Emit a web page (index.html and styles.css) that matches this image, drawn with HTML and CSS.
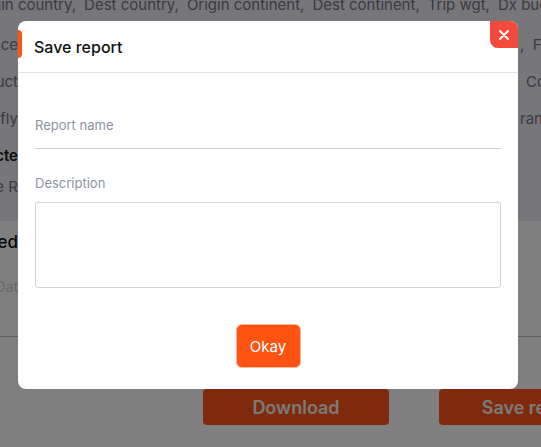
FILE: index.html
```html
<!DOCTYPE html>
<html lang="en">
<head>
<meta charset="utf-8">
<title>Save report</title>
<link rel="stylesheet" href="styles.css">
</head>
<body>
<div class="page">
  <div class="filters">
    <div class="row row-full">
      <span>Origin country,</span><span>Dest country,</span><span>Origin continent,</span><span>Dest continent,</span><span>Trip wgt,</span><span>Dx buckets</span>
    </div>
    <div class="row">
      <div class="clip-left">Service</div><div class="clip-right pad-2">,&nbsp;&nbsp;Flow</div>
    </div>
    <div class="row">
      <div class="clip-left">Product</div><div class="clip-right pad-8">Country</div>
    </div>
    <div class="row">
      <div class="clip-left">Notifly</div><div class="clip-right pad-2">rance</div>
    </div>
    <div class="row row-bold">
      <div class="clip-left">Selecte</div><div class="clip-right"></div>
    </div>
    <div class="row row-last">
      <div class="clip-left">Date R</div><div class="clip-right"></div>
    </div>
  </div>
  <div class="section">
    <div class="clip-left heading">Saved</div>
    <div class="clip-left muted">Dat</div>
  </div>
  <div class="divider"></div>
  <div class="actions">
    <button class="big-btn">Download</button>
    <button class="big-btn">Save report</button>
  </div>
</div>

<div class="backdrop">
  <div class="modal">
    <span class="modal-tab"></span>
    <div class="modal-header">
      <h2 class="modal-title">Save report</h2>
    </div>
    <button class="modal-close" aria-label="Close">
      <svg width="10" height="10" viewBox="0 0 10 10"><path d="M1 1L9 9M9 1L1 9" stroke="#fff" stroke-width="1.8" stroke-linecap="round"/></svg>
    </button>
    <div class="modal-body">
      <label class="field">
        <span class="field-label">Report name</span>
        <span class="field-line"></span>
      </label>
      <div class="field-label desc-label">Description</div>
      <div class="textarea"></div>
      <div class="modal-footer">
        <button class="okay-btn">Okay</button>
      </div>
    </div>
  </div>
</div>
</body>
</html>
```

FILE: styles.css
```css
* { box-sizing: border-box; }

html, body {
  margin: 0;
  padding: 0;
  width: 541px;
  height: 447px;
  overflow: hidden;
  font-family: Inter, "Noto Sans", sans-serif;
}

.page {
  background: #ffffff;
  height: 447px;
}

.filters {
  background: #eeecf6;
  height: 221px;
  display: flex;
  flex-direction: column;
  gap: 21px;
  color: #767680;
  font-size: 15px;
  line-height: 16px;
}

.row {
  display: flex;
  justify-content: space-between;
  height: 16px;
  white-space: nowrap;
}

.row-full {
  justify-content: flex-start;
  gap: 8px;
  margin-left: -29px;
  margin-top: -3px;
  margin-bottom: 3px;
  overflow: hidden;
}

.row-bold { color: #1a1a1a; font-weight: 600; }
.row-last { margin-top: -6px; }

.clip-left {
  width: 18px;
  display: flex;
  justify-content: flex-end;
  overflow: hidden;
  white-space: nowrap;
}

.clip-right {
  width: 23px;
  overflow: hidden;
  white-space: nowrap;
}

.pad-2 { padding-left: 2px; }
.pad-4 { padding-left: 4px; }
.pad-8 { padding-left: 8px; }

.section {
  height: 115px;
  display: flex;
  flex-direction: column;
  padding-top: 11px;
}

.heading {
  font-size: 17px;
  line-height: 20px;
  font-weight: 500;
  color: #111;
}

.muted {
  margin-top: 27px;
  font-size: 14px;
  line-height: 16px;
  color: #cfcfcf;
}

.divider {
  height: 1px;
  background: #bcbcbc;
}

.actions {
  display: flex;
  gap: 50px;
  padding-left: 203px;
  margin-top: 52px;
}

.big-btn {
  flex: 0 0 186px;
  height: 36px;
  border: none;
  border-radius: 4px;
  background: #ff5419;
  color: #f4f4f4;
  font-family: Inter, sans-serif;
  font-size: 18px;
  font-weight: 600;
}

.backdrop {
  position: fixed;
  inset: 0;
  background: rgba(0, 0, 0, 0.5);
}

.modal {
  position: relative;
  margin: 21px 0 0 18px;
  width: 500px;
  height: 368px;
  background: #fff;
  border-radius: 8px;
}

.modal-tab {
  position: absolute;
  left: 0;
  top: 9px;
  width: 4px;
  height: 28px;
  background: #ff5314;
  border-radius: 0 4px 4px 0;
}

.modal-header {
  height: 52px;
  display: flex;
  align-items: center;
  padding-left: 16px;
  border-bottom: 1px solid #e2e2e6;
}

.modal-title {
  margin: 0;
  font-size: 16px;
  font-weight: 500;
  color: #111;
}

.modal-close {
  position: absolute;
  top: 0;
  right: 0;
  width: 28px;
  height: 27px;
  padding: 0;
  border: none;
  background: #f44a3c;
  border-radius: 0 8px 0 8px;
  display: flex;
  align-items: center;
  justify-content: center;
}

.modal-body {
  padding: 44px 17px 0;
  display: flex;
  flex-direction: column;
}

.field {
  display: flex;
  flex-direction: column;
}

.field-label {
  font-size: 13px;
  line-height: 16px;
  color: #8b93a0;
}

.field-line {
  height: 16px;
  border-bottom: 1px solid #cfcfd3;
}

.desc-label {
  margin-top: 26px;
}

.textarea {
  margin-top: 11px;
  height: 86px;
  border: 1px solid #d2d2d8;
  border-radius: 3px;
}

.modal-footer {
  display: flex;
  justify-content: center;
  margin-top: 36px;
}

.okay-btn {
  width: 65px;
  height: 44px;
  border: 1px solid #f7b49a;
  border-radius: 6px;
  background: #ff5314;
  color: #fff;
  font-family: Inter, sans-serif;
  font-size: 15px;
}
```
